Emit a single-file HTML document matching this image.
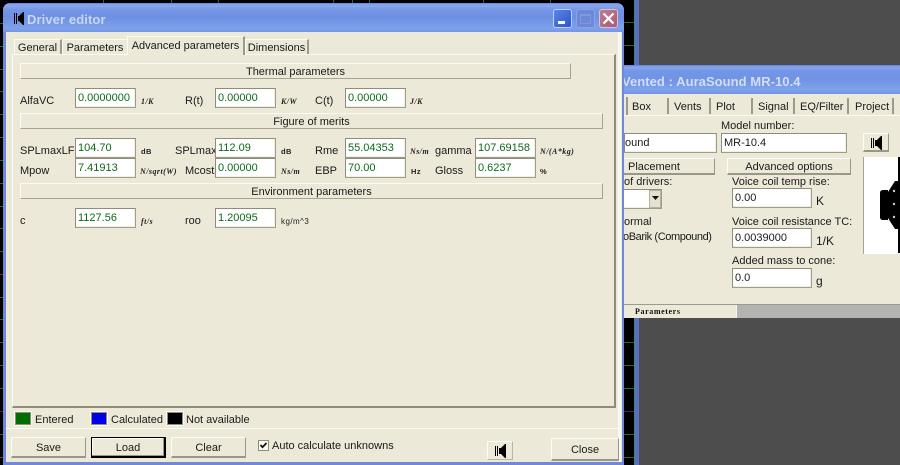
<!DOCTYPE html>
<html>
<head>
<meta charset="utf-8">
<style>
html,body{margin:0;padding:0;background:#000;}
#root{position:relative;width:900px;height:465px;overflow:hidden;background:#000;font-family:"Liberation Sans",sans-serif;font-size:11px;color:#1a1a1a;}
#root div,#root span{position:absolute;box-sizing:border-box;}
.t{line-height:14px;height:14px;white-space:nowrap;transform:translateY(1px);}
.ipt{background:#fff;border:1px solid #9f9d8a;border-top-color:#8e8c7a;border-left-color:#8e8c7a;box-shadow:inset -1px -1px 0 #f2f0e4;height:20px;line-height:18px;padding-left:2px;color:#0b6b17;white-space:nowrap;}
.blk{color:#1a1a1a;}
.bar{background:#ece9d8;border:1px solid #a7a491;border-top-color:#fbfaf5;border-left-color:#fbfaf5;height:16px;text-align:center;line-height:16px;white-space:nowrap;}
.u{font-family:"Liberation Serif",serif;font-weight:bold;font-style:italic;font-size:8px;line-height:10px;height:10px;white-space:nowrap;color:#222;letter-spacing:.45px;transform:translateY(1px);}
.u2{font-family:"Liberation Sans",sans-serif;font-style:normal;font-weight:bold;font-size:7.5px;}
.btn{background:#ece9d8;border:1px solid #fdfcf8;border-right-color:#99978a;border-bottom:2px solid #99978a;text-align:center;white-space:nowrap;}
.tab{height:15px;line-height:16px;text-align:center;border-right:2px solid #9c9a88;border-left:1px solid #fbfaf5;border-top:1px solid #fbfaf5;white-space:nowrap;background:#ece9d8;}
.sw{width:16px;height:13px;border:1px solid #8f8d7b;outline:1px solid #fbfaf5;}
.tick{left:0;height:1px;background:#1f6e2a;}
.vt{top:0;width:1px;height:3px;background:#1f6e2a;}
</style>
</head>
<body>
<div id="root">

<!-- plot strip behind -->
<div style="left:0;top:0;width:900px;height:465px;background:#000"></div>
<div class="tick" style="top:22px;left:624px;width:10px"></div>
<div class="tick" style="top:45px;left:624px;width:10px"></div>
<div class="tick" style="top:342px;left:624px;width:10px"></div>
<div class="tick" style="top:365px;left:624px;width:10px"></div>
<div class="tick" style="top:388px;left:624px;width:10px"></div>
<div class="tick" style="top:411px;left:624px;width:10px;background:#5b1a6b"></div>
<div class="tick" style="top:434px;left:624px;width:10px"></div>
<div class="tick" style="top:457px;left:624px;width:10px"></div>

<div class="tick" style="top:23px;width:3px"></div>
<div class="tick" style="top:46px;width:3px"></div>
<div class="tick" style="top:69px;width:3px"></div>
<div class="tick" style="top:91px;width:3px"></div>
<div class="tick" style="top:114px;width:3px"></div>
<div class="tick" style="top:137px;width:3px"></div>
<div class="tick" style="top:160px;width:3px"></div>
<div class="tick" style="top:183px;width:3px"></div>
<div class="tick" style="top:206px;width:3px"></div>
<div class="tick" style="top:228px;width:3px"></div>
<div class="tick" style="top:251px;width:3px"></div>
<div class="tick" style="top:274px;width:3px;background:#8a1f3a"></div>
<div class="tick" style="top:297px;width:3px"></div>
<div class="tick" style="top:319px;width:3px"></div>
<div class="tick" style="top:342px;width:3px"></div>
<div class="tick" style="top:365px;width:3px"></div>
<div class="tick" style="top:388px;width:3px"></div>
<div class="tick" style="top:411px;width:3px;background:#5b1a6b"></div>
<div class="tick" style="top:434px;width:3px"></div>
<div class="tick" style="top:457px;width:3px"></div>

<div class="vt" style="left:103px"></div>
<div class="vt" style="left:171px"></div>
<div class="vt" style="left:218px"></div>
<div class="vt" style="left:333px"></div>
<div class="vt" style="left:352px"></div>
<div class="vt" style="left:369px"></div>
<div class="vt" style="left:483px"></div>
<div class="vt" style="left:550px"></div>

<!-- dark right area -->
<div style="left:634px;top:0;width:1px;height:465px;background:#3f8a63"></div>
<div style="left:635px;top:0;width:4px;height:465px;background:#5c6ec4"></div>
<div style="left:639px;top:0;width:261px;height:465px;background:#4d4d4d"></div>

<!-- Vented window -->
<div style="left:624px;top:65px;width:276px;height:29px;background:linear-gradient(#5f80dc 0,#86a6ec 2px,#7596e6 6px,#7093e4 50%,#7ea2ec 85%,#7393e0 100%)"></div>
<div class="t" style="left:622px;top:73px;font-size:13px;font-weight:bold;color:#d3def5;letter-spacing:0.05px;line-height:16px;height:16px;width:200px;overflow:hidden">Vented : AuraSound MR-10.4</div>
<div style="left:624px;top:94px;width:276px;height:224px;background:#ece9d8"></div>
<div style="left:624px;top:115px;width:276px;height:1px;background:#fbfaf5"></div>

<div style="left:626px;top:97px;width:2px;height:18px;background:#9c9a88"></div>
<div class="t" style="left:632px;top:99px">Box</div>
<div style="left:667px;top:98px;width:2px;height:16px;background:#9c9a88"></div>
<div class="t" style="left:674px;top:99px">Vents</div>
<div style="left:709px;top:98px;width:2px;height:16px;background:#9c9a88"></div>
<div class="t" style="left:716px;top:99px">Plot</div>
<div style="left:751px;top:98px;width:2px;height:16px;background:#9c9a88"></div>
<div class="t" style="left:758px;top:99px">Signal</div>
<div style="left:793px;top:98px;width:2px;height:16px;background:#9c9a88"></div>
<div class="t" style="left:800px;top:99px">EQ/Filter</div>
<div style="left:847px;top:98px;width:2px;height:16px;background:#9c9a88"></div>
<div class="t" style="left:855px;top:99px">Project</div>
<div style="left:892px;top:98px;width:2px;height:16px;background:#9c9a88"></div>

<div class="t" style="left:721px;top:118px">Model number:</div>
<div class="ipt blk" style="left:624px;top:133px;width:93px;padding-left:0;">ound</div>
<div class="ipt blk" style="left:721px;top:133px;width:126px;">MR-10.4</div>
<div class="btn" style="left:863px;top:133px;width:26px;height:19px">
  <svg style="position:absolute;left:6px;top:1px" width="14" height="16" viewBox="0 0 14 16"><path d="M1 3h1v10H1zM3 3h1v10H3zM5 5h2l4-4h1v14h-1l-4-4H5z" fill="#000"/></svg>
</div>
<div class="btn" style="left:624px;top:158px;width:91px;height:17px;border-left:0;line-height:16px;padding-left:4px;text-align:left">Placement</div>
<div class="btn" style="left:727px;top:158px;width:124px;height:17px;line-height:16px">Advanced options</div>

<div class="t" style="left:624px;top:174px">of drivers:</div>
<div class="ipt" style="left:624px;top:189px;width:38px;height:20px;border-left:0"></div>
<div style="left:649px;top:190px;width:12px;height:18px;background:#e4e1cf;border:1px solid #b5b3a0"></div>
<svg style="position:absolute;left:652px;top:196px" width="7" height="5" viewBox="0 0 7 5"><path d="M0 0h7L3.5 4z" fill="#111"/></svg>
<div class="t" style="left:624px;top:214px">ormal</div>
<div class="t" style="left:623px;top:229px;letter-spacing:-.4px">oBarik (Compound)</div>

<div class="t" style="left:732px;top:174px">Voice coil temp rise:</div>
<div class="ipt blk" style="left:732px;top:188px;width:80px">0.00</div>
<div class="t" style="left:816px;top:193px;font-size:12px">K</div>
<div class="t" style="left:732px;top:214px">Voice coil resistance TC:</div>
<div class="ipt blk" style="left:732px;top:228px;width:80px">0.0039000</div>
<div class="t" style="left:816px;top:233px;font-size:12px">1/K</div>
<div class="t" style="left:732px;top:253px">Added mass to cone:</div>
<div class="ipt blk" style="left:732px;top:268px;width:80px">0.0</div>
<div class="t" style="left:816px;top:273px;font-size:12px">g</div>

<div style="left:863px;top:157px;width:37px;height:97px;background:#fff;border-left:1px solid #a7a491"></div>
<div style="left:898px;top:157px;width:2px;height:96px;background:#000"></div>
<svg style="position:absolute;left:880px;top:180px" width="20" height="50" viewBox="0 0 20 50">
<path d="M0 13q0-3 3-3h5v2L15 1h5v48h-5L8 38v2H3q-3 0-3-3z" fill="#000"/>
<circle cx="14" cy="11" r="1.2" fill="#ccc"/><circle cx="14" cy="24" r="1.2" fill="#ccc"/><circle cx="14" cy="37" r="1.2" fill="#ccc"/>
</svg>

<div style="left:624px;top:304px;width:276px;height:1px;background:#9c9a88"></div>
<div style="left:737px;top:305px;width:163px;height:13px;background:#b3b3b1"></div>
<div style="left:736px;top:305px;width:1px;height:13px;background:#f8f6ec"></div>
<div class="t" style="left:635px;top:304px;font-family:'Liberation Serif',serif;font-weight:bold;font-size:8px;letter-spacing:.6px;color:#111">Parameters</div>
<div style="left:624px;top:318px;width:10px;height:2px;background:#000"></div>

<!-- Main window -->
<div style="left:3px;top:3px;width:621px;height:462px;background:#6f89d6;border-radius:7px 7px 0 0"></div>
<div style="left:3px;top:3px;width:621px;height:29px;border-radius:7px 7px 0 0;background:linear-gradient(#6483de 0,#8aa8ee 2px,#7596e6 7px,#6f90e2 50%,#7ea2ec 88%,#7595e2 100%)"></div>
<svg style="position:absolute;left:13px;top:11px" width="12" height="15" viewBox="0 0 12 15"><path d="M1 2h1v11H1zM3 2h1v11H3zM5 5h1l4-4h1v13h-1l-4-4H5z" fill="#000"/></svg>
<div class="t" style="left:27px;top:11px;font-size:13px;font-weight:bold;color:#c9d6f3;line-height:16px;height:16px;letter-spacing:.1px">Driver editor</div>

<!-- caption buttons -->
<div style="left:553px;top:9px;width:19px;height:19px;border-radius:3px;background:linear-gradient(135deg,#5a85e8,#2c56c8);border:1px solid #bcd0f5"></div>
<div style="left:558px;top:21px;width:7px;height:3px;background:#fff"></div>
<div style="left:576px;top:9px;width:19px;height:19px;border-radius:3px;background:#6d88d9;border:1px solid #8ba3e6"></div>
<div style="left:580px;top:14px;width:11px;height:10px;border:1px solid #8299e0;border-top-width:2px"></div>
<div style="left:599px;top:9px;width:19px;height:19px;border-radius:3px;background:linear-gradient(135deg,#c27a90,#a65c78);border:1px solid #d9c0d6"></div>
<svg style="position:absolute;left:602px;top:12px" width="13" height="13" viewBox="0 0 13 13"><path d="M1.5 1.5l10 10M11.5 1.5l-10 10" stroke="#fff" stroke-width="2.2"/></svg>

<!-- client -->
<div style="left:6px;top:32px;width:616px;height:430px;background:#ece9d8"></div>
<div style="left:618px;top:32px;width:3px;height:430px;background:#f9f8f1"></div>

<!-- tab page -->
<div style="left:12px;top:54px;width:604px;height:354px;background:#ece9d8;border:1px solid #fbfaf5;border-right:2px solid #8e8c7a;border-bottom:2px solid #8e8c7a"></div>

<div class="tab" style="left:14px;top:39px;width:48px">General</div>
<div class="tab" style="left:62px;top:39px;width:65px;border-right:0">Parameters</div>
<div class="tab" style="left:127px;top:36px;width:118px;height:19px;line-height:18px;border-bottom:0">Advanced parameters</div>
<div class="tab" style="left:245px;top:39px;width:64px">Dimensions</div>

<!-- Section bars -->
<div class="bar" style="left:20px;top:63px;width:551px">Thermal parameters</div>
<div class="bar" style="left:20px;top:113px;width:583px">Figure of merits</div>
<div class="bar" style="left:20px;top:183px;width:583px">Environment parameters</div>

<!-- Row 1 -->
<div class="t" style="left:20px;top:93px">AlfaVC</div>
<div class="ipt" style="left:75px;top:88px;width:61px">0.0000000</div>
<div class="u" style="left:141px;top:96px">1/K</div>
<div class="t" style="left:185px;top:93px">R(t)</div>
<div class="ipt" style="left:215px;top:88px;width:61px">0.00000</div>
<div class="u" style="left:281px;top:96px">K/W</div>
<div class="t" style="left:315px;top:93px">C(t)</div>
<div class="ipt" style="left:345px;top:88px;width:61px">0.00000</div>
<div class="u" style="left:410px;top:96px">J/K</div>

<!-- Row 2 -->
<div class="t" style="left:20px;top:143px">SPLmaxLF</div>
<div class="ipt" style="left:75px;top:138px;width:61px">104.70</div>
<div class="u u2" style="left:141px;top:146px">dB</div>
<div class="t" style="left:175px;top:143px">SPLmax</div>
<div class="ipt" style="left:215px;top:138px;width:61px">112.09</div>
<div class="u u2" style="left:281px;top:146px">dB</div>
<div class="t" style="left:315px;top:143px">Rme</div>
<div class="ipt" style="left:345px;top:138px;width:61px">55.04353</div>
<div class="u" style="left:410px;top:146px">Ns/m</div>
<div class="t" style="left:435px;top:143px">gamma</div>
<div class="ipt" style="left:475px;top:138px;width:61px">107.69158</div>
<div class="u" style="left:540px;top:146px">N/(A*kg)</div>

<!-- Row 3 -->
<div class="t" style="left:20px;top:163px">Mpow</div>
<div class="ipt" style="left:75px;top:158px;width:61px">7.41913</div>
<div class="u" style="left:140px;top:166px">N/sqrt(W)</div>
<div class="t" style="left:185px;top:163px">Mcost</div>
<div class="ipt" style="left:215px;top:158px;width:61px">0.00000</div>
<div class="u" style="left:281px;top:166px">Ns/m</div>
<div class="t" style="left:315px;top:163px">EBP</div>
<div class="ipt" style="left:345px;top:158px;width:61px">70.00</div>
<div class="u u2" style="left:411px;top:166px">Hz</div>
<div class="t" style="left:435px;top:163px">Gloss</div>
<div class="ipt" style="left:475px;top:158px;width:61px">0.6237</div>
<div class="u u2" style="left:540px;top:166px">%</div>

<!-- Row 4 -->
<div class="t" style="left:20px;top:213px">c</div>
<div class="ipt" style="left:75px;top:208px;width:61px">1127.56</div>
<div class="u" style="left:141px;top:216px">ft/s</div>
<div class="t" style="left:185px;top:213px">roo</div>
<div class="ipt" style="left:215px;top:208px;width:61px">1.20095</div>
<div class="u" style="left:281px;top:216px;font-family:'Liberation Sans',sans-serif;font-style:normal;font-weight:normal">kg/m^3</div>

<!-- Legend -->
<div class="sw" style="left:15px;top:412px;background:#006e00"></div>
<div class="t" style="left:35px;top:412px">Entered</div>
<div class="sw" style="left:91px;top:412px;background:#0000e6"></div>
<div class="t" style="left:111px;top:412px">Calculated</div>
<div class="sw" style="left:167px;top:412px;background:#000"></div>
<div class="t" style="left:186px;top:412px">Not available</div>

<div style="left:6px;top:428px;width:612px;height:1px;background:#fbfaf5"></div>

<!-- Buttons -->
<div class="btn" style="left:11px;top:437px;width:75px;height:21px;line-height:20px">Save</div>
<div class="btn" style="left:91px;top:437px;width:75px;height:21px;line-height:20px;border:1px solid #000;border-right-width:2px;border-bottom-width:2px;box-shadow:inset -1px -1px 0 #99978a,inset 1px 1px 0 #fdfcf8">Load</div>
<div class="btn" style="left:171px;top:437px;width:75px;height:21px;line-height:20px">Clear</div>
<div style="left:258px;top:440px;width:11px;height:11px;background:#fbfaf3;border:1px solid #8e8c7a"></div>
<svg style="position:absolute;left:259px;top:441px" width="9" height="9" viewBox="0 0 9 9"><path d="M1.5 4l2 2.2L7.5 2" fill="none" stroke="#111" stroke-width="1.8"/></svg>
<div class="t" style="left:272px;top:438px">Auto calculate unknowns</div>

<div class="btn" style="left:487px;top:441px;width:26px;height:19px;border-right-color:#b8b6a5;border-bottom:1px solid #b8b6a5">
  <svg style="position:absolute;left:6px;top:1px" width="14" height="16" viewBox="0 0 14 16"><path d="M1 3h1v10H1zM3 3h1v10H3zM5 5h2l4-4h1v14h-1l-4-4H5z" fill="#000"/></svg>
</div>
<div class="btn" style="left:551px;top:438px;width:68px;height:23px;line-height:23px">Close</div>

</div>
</body>
</html>
